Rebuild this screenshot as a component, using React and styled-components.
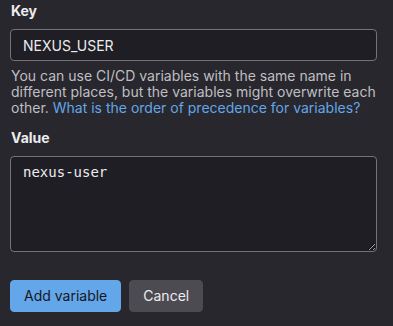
import React from "react";
import styled, { createGlobalStyle } from "styled-components";

const Global = createGlobalStyle`
  html, body { margin: 0; padding: 0; background: #28272d; }
  body { font-family: Inter, "Noto Sans", sans-serif; color: #ececef; }
`;

const Form = styled.form`
  padding: 1px 16px 0 10px;
  display: flex;
  flex-direction: column;
`;

const Group = styled.div`
  display: flex;
  flex-direction: column;
  margin-bottom: ${(p) => p.$mb || 16}px;
`;

const Label = styled.label`
  font-size: 14px;
  font-weight: 700;
  line-height: 20px;
  margin: 0 0 8px 1px;
  color: #ececef;
`;

const Input = styled.input`
  box-sizing: border-box;
  height: 32px;
  width: 100%;
  padding: 0 12px;
  background: #1f1e24;
  border: 1px solid #737278;
  border-radius: 4px;
  color: #ececef;
  font-family: Inter, "Noto Sans", sans-serif;
  font-size: 14px;
  outline: none;
`;

const Help = styled.p`
  margin: 7px 0 0 1px;
  font-size: 14px;
  line-height: 16px;
  color: #bfbfc3;
`;

const Link = styled.a`
  color: #63a6e9;
  text-decoration: none;
`;

const Area = styled.textarea`
  box-sizing: border-box;
  height: 96px;
  width: 100%;
  padding: 5px 12px;
  background: #1f1e24;
  border: 1px solid #737278;
  border-radius: 4px;
  color: #ececef;
  font-family: "DejaVu Sans Mono", monospace;
  font-size: 14px;
  line-height: 20px;
  outline: none;
  resize: vertical;
  display: block;
`;

const Actions = styled.div`
  display: flex;
  gap: 8px;
`;

const Button = styled.button`
  box-sizing: border-box;
  height: 32px;
  padding: 0 13px;
  border-radius: 4px;
  border: 1px solid ${(p) => (p.$primary ? "#63a6e9" : "#4c4b51")};
  background: ${(p) => (p.$primary ? "#63a6e9" : "#4c4b51")};
  color: ${(p) => (p.$primary ? "#18171d" : "#ececef")};
  font-family: Inter, "Noto Sans", sans-serif;
  font-size: 14px;
  line-height: 16px;
`;

export default function App() {
  return (
    <>
      <Global />
      <Form onSubmit={(e) => e.preventDefault()}>
        <Group $mb={12}>
          <Label>Key</Label>
          <Input defaultValue="NEXUS_USER" />
          <Help>
            You can use CI/CD variables with the same name in different places,
            but the variables might overwrite each other.{" "}
            <Link href="#">What is the order of precedence for variables?</Link>
          </Help>
        </Group>
        <Group $mb={28}>
          <Label>Value</Label>
          <Area defaultValue="nexus-user" />
        </Group>
        <Actions>
          <Button $primary type="submit">Add variable</Button>
          <Button type="button">Cancel</Button>
        </Actions>
      </Form>
    </>
  );
}
